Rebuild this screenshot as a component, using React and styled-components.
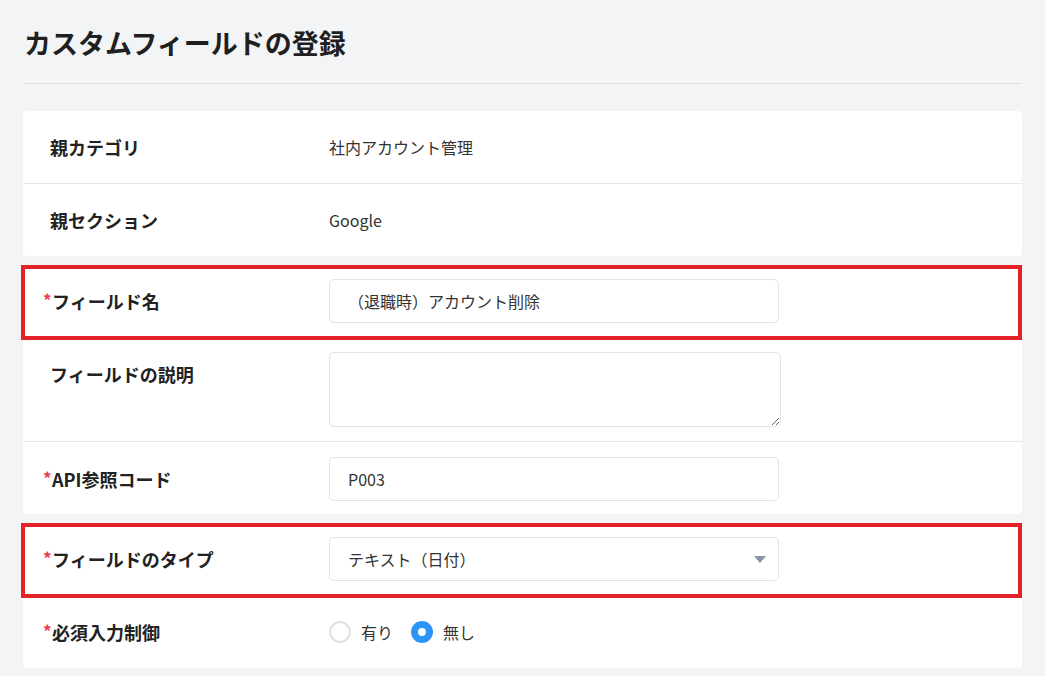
import React from 'react';
import styled, { createGlobalStyle } from 'styled-components';

const GlobalStyle = createGlobalStyle`
  html, body {
    margin: 0;
    padding: 0;
    background: #f3f4f6;
    overflow: hidden;
  }
  body {
    font-family: "Noto Sans CJK JP", "Noto Sans", sans-serif;
    color: #222;
  }
  * {
    box-sizing: border-box;
  }
`;

const App = () => {
  return (
    <Page>
      <GlobalStyle />
      <Header>
        <Title>カスタムフィールドの登録</Title>
      </Header>
      <CardList>
        <Card>
          <Row>
            <Label>親カテゴリ</Label>
            <Value>社内アカウント管理</Value>
          </Row>
          <Row last>
            <Label>親セクション</Label>
            <Value>Google</Value>
          </Row>
        </Card>

        <Card>
          <Row>
            <Label><Required>*</Required>フィールド名</Label>
            <TextInput defaultValue="（退職時）アカウント削除" />
            <Highlight />
          </Row>
          <Row top>
            <Label>フィールドの説明</Label>
            <TextArea />
          </Row>
          <Row last loose>
            <Label><Required>*</Required>API参照コード</Label>
            <TextInput defaultValue="P003" />
          </Row>
        </Card>

        <Card>
          <Row>
            <Label><Required>*</Required>フィールドのタイプ</Label>
            <SelectWrap>
              <Select defaultValue="date">
                <option value="date">テキスト（日付）</option>
                <option value="text">テキスト</option>
              </Select>
              <Caret width="12" height="7" viewBox="0 0 12 7">
                <path d="M0 0 L12 0 L6 7 Z" fill="#8a94a6" />
              </Caret>
            </SelectWrap>
            <Highlight />
          </Row>
          <Row last>
            <Label><Required>*</Required>必須入力制御</Label>
            <RadioGroup>
              <RadioOption>
                <Radio />
                有り
              </RadioOption>
              <RadioOption>
                <Radio checked />
                無し
              </RadioOption>
            </RadioGroup>
          </Row>
        </Card>
      </CardList>
    </Page>
  );
};

const Page = styled.div`
  padding: 0 23px 8px;
`;
const Header = styled.div`
  height: 84px;
  padding-top: 3px;
  display: flex;
  align-items: center;
  border-bottom: 1px solid #dfe1e5;
`;
const Title = styled.h1`
  margin: 0 0 0 1px;
  font-size: 27px;
  font-weight: 700;
  color: #1f1f1f;
  line-height: 1.4;
`;
const CardList = styled.div`
  margin-top: 27px;
  display: flex;
  flex-direction: column;
  gap: 9px;
`;
const Card = styled.div`
  background: #fff;
  border-radius: 4px;
`;
const Row = styled.div`
  position: relative;
  display: grid;
  grid-template-columns: 279px 450px;
  align-items: ${(p) => (p.top ? 'start' : 'center')};
  padding: ${(p) => (p.loose ? '15px 27px 13px' : '14px 27px')};
  border-bottom: ${(p) => (p.last ? 'none' : '1px solid #e5e7eb')};
`;
const Label = styled.div`
  display: flex;
  align-items: center;
  min-height: 44px;
  font-size: 18px;
  font-weight: 700;
  color: #222;
  white-space: nowrap;
`;
const Required = styled.span`
  display: inline-block;
  width: 9px;
  margin-left: -7px;
  margin-top: -4px;
  color: #ec3b4f;
  font-size: 17px;
  font-weight: 700;
`;
const Value = styled.div`
  font-size: 16px;
  line-height: 44px;
  color: #333;
`;
const TextInput = styled.input`
  width: 450px;
  height: 44px;
  padding: 0 18px;
  border: 1px solid #dfe3e8;
  border-radius: 5px;
  font-family: inherit;
  font-size: 16px;
  color: #333;
  background: #fff;
  outline: none;
`;
const TextArea = styled.textarea`
  width: 452px;
  height: 75px;
  padding: 10px 18px;
  border: 1px solid #dfe3e8;
  border-radius: 5px;
  font-family: inherit;
  font-size: 16px;
  color: #333;
  outline: none;
`;
const SelectWrap = styled.div`
  position: relative;
  width: 450px;
`;
const Select = styled.select`
  appearance: none;
  width: 100%;
  height: 44px;
  padding: 0 40px 0 18px;
  border: 1px solid #dfe3e8;
  border-radius: 5px;
  font-family: inherit;
  font-size: 16px;
  color: #333;
  background: #fff;
  outline: none;
`;
const Caret = styled.svg`
  position: absolute;
  right: 13px;
  top: 19px;
  pointer-events: none;
`;
const Highlight = styled.div`
  position: absolute;
  top: 0;
  left: -2px;
  right: 0;
  bottom: -3px;
  border: 4px solid #e52228;
  pointer-events: none;
`;
const RadioGroup = styled.div`
  display: flex;
  align-items: center;
  gap: 18px;
  min-height: 44px;
`;
const RadioOption = styled.label`
  display: flex;
  align-items: center;
  gap: 10px;
  font-size: 16px;
  color: #333;
`;
const Radio = styled.span`
  width: 22px;
  height: 22px;
  border-radius: 50%;
  border: ${(p) => (p.checked ? '7px solid #2e95f8' : '2px solid #dde1e6')};
  background: #fff;
`;

export default App;
